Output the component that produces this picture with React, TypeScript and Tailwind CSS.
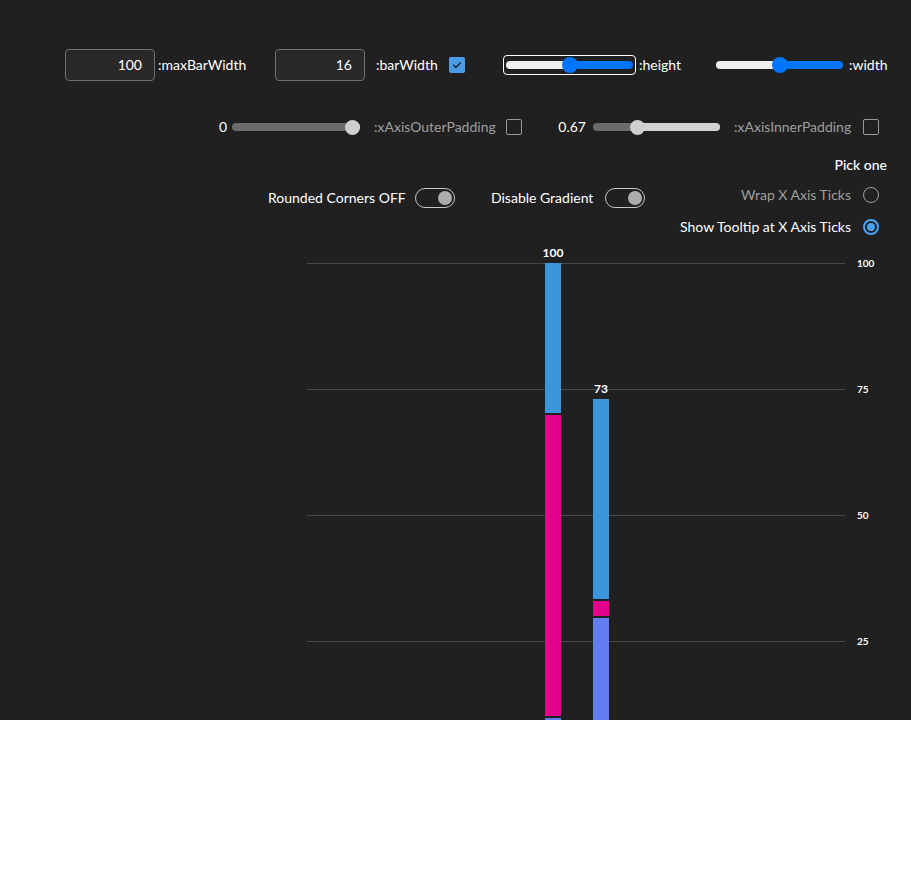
import React from "react";

function RangeTrack({
  width,
  value,
  height,
  trackH,
  leftCls,
  rightCls,
  thumbCls,
  thumbSize,
}: {
  width: number;
  value: number;
  height: number;
  trackH: number;
  leftCls: string;
  rightCls: string;
  thumbCls: string;
  thumbSize: number;
}) {
  // RTL slider: value 0 at the right end
  const c = 8 + (1 - value) * (width - 16);
  return (
    <div className="relative flex items-center" style={{ width, height }}>
      <div className="flex w-full overflow-hidden rounded-full" style={{ height: trackH }}>
        <div className={leftCls} style={{ width: c }} />
        <div className={`flex-1 ${rightCls}`} />
      </div>
      <div
        className={`absolute rounded-full ${thumbCls}`}
        style={{ left: c - thumbSize / 2, width: thumbSize, height: thumbSize, top: (height - thumbSize) / 2 }}
      />
    </div>
  );
}

function Checkbox({ checked }: { checked?: boolean }) {
  if (checked) {
    return (
      <div className="flex h-4 w-4 shrink-0 items-center justify-center rounded-[2px] bg-[#4a9be8]">
        <svg width="16" height="16" viewBox="0 0 16 16" fill="none">
          <path d="M4.6 8.3l2.2 2.2 4.6-4.7" stroke="#1c1c1c" strokeWidth="1.3" strokeLinecap="round" strokeLinejoin="round" />
        </svg>
      </div>
    );
  }
  return <div className="h-4 w-4 shrink-0 rounded-[2px] border border-[#9a9a9a]" />;
}

function Toggle() {
  return (
    <div className="ml-3 flex h-5 w-10 shrink-0 items-center justify-end rounded-full border border-[#c8c8c8] pr-[2px]">
      <div className="h-[14px] w-[14px] rounded-full bg-[#adadad]" />
    </div>
  );
}

function Radio({ checked }: { checked?: boolean }) {
  if (checked) {
    return (
      <div className="ml-3 flex h-4 w-4 shrink-0 items-center justify-center rounded-full border-2 border-[#4aa3f5]">
        <div className="h-2 w-2 rounded-full bg-[#4aa3f5]" />
      </div>
    );
  }
  return <div className="ml-3 h-4 w-4 shrink-0 rounded-full border border-[#a0a0a0]" />;
}

function Chart() {
  const grid = [23.5, 149.5, 275.5, 401.5];
  const ticks = [
    { y: 27, t: "100" },
    { y: 153, t: "75" },
    { y: 279, t: "50" },
    { y: 405, t: "25" },
  ];
  return (
    <svg width="911" height="480" className="mt-[3px] block">
      {grid.map((y) => (
        <line key={y} x1="307" x2="845" y1={y} y2={y} stroke="#474747" strokeWidth="1" />
      ))}
      {ticks.map((k) => (
        <text key={k.t} x="857" y={k.y} fill="#ffffff" fontSize="10" fontWeight="700" fontFamily="Lato, 'Noto Sans', sans-serif">
          {k.t}
        </text>
      ))}
      {/* bar 1 */}
      <rect x="545" y="23" width="16" height="150" fill="#3a96dd" />
      <rect x="545" y="175" width="16" height="301" fill="#e3008c" />
      <rect x="545" y="478" width="16" height="60" fill="#637cef" />
      <text x="553" y="17" textAnchor="middle" fill="#ffffff" fontSize="12" fontWeight="700" fontFamily="Lato, 'Noto Sans', sans-serif">
        100
      </text>
      {/* bar 2 */}
      <rect x="593" y="159" width="16" height="200" fill="#3a96dd" />
      <rect x="593" y="361" width="16" height="15" fill="#e3008c" />
      <rect x="593" y="378" width="16" height="160" fill="#637cef" />
      <text x="601" y="153" textAnchor="middle" fill="#ffffff" fontSize="12" fontWeight="700" fontFamily="Lato, 'Noto Sans', sans-serif">
        73
      </text>
    </svg>
  );
}

export default function App() {
  return (
    <div className="min-h-[891px] w-[911px] bg-white font-['Lato','Noto_Sans',sans-serif] text-sm text-white">
      <div className="h-[720px] overflow-hidden bg-[#202020]">
        {/* Row 1 */}
        <div className="mt-[49px] flex h-8 items-center whitespace-nowrap">
          <div className="ml-[65px] flex h-8 w-[90px] shrink-0 items-center justify-end rounded-[4px] border border-[#6e6e6e] bg-[#292929] pr-3">
            100
          </div>
          <div className="ml-[3px] w-[117px] shrink-0">:maxBarWidth</div>
          <div className="flex h-8 w-[90px] shrink-0 items-center justify-end rounded-[4px] border border-[#6e6e6e] bg-[#292929] pr-3">
            16
          </div>
          <div className="ml-[11px] w-[73px] shrink-0">:barWidth</div>
          <Checkbox checked />
          <div className="ml-[38px] flex h-5 w-[133px] shrink-0 items-center justify-center rounded-[4px] border border-white">
            <RangeTrack
              width={127}
              value={0.5}
              height={16}
              trackH={8}
              leftCls="bg-[#efefef]"
              rightCls="bg-[#0075ff]"
              thumbCls="bg-[#0075ff]"
              thumbSize={16}
            />
          </div>
          <div className="ml-[3px] w-[74px] shrink-0">:height</div>
          <div className="flex h-5 w-[133px] shrink-0 items-center justify-center">
            <RangeTrack
              width={127}
              value={0.5}
              height={16}
              trackH={8}
              leftCls="bg-[#efefef]"
              rightCls="bg-[#0075ff]"
              thumbCls="bg-[#0075ff]"
              thumbSize={16}
            />
          </div>
          <div className="ml-[3px] shrink-0">:width</div>
        </div>

        {/* Row 2 */}
        <div className="mt-[36px] flex h-5 items-center whitespace-nowrap">
          <div className="ml-[200px] w-[27px] shrink-0 text-right">0</div>
          <div className="ml-[5px] shrink-0">
            <RangeTrack
              width={128}
              value={0}
              height={16}
              trackH={8}
              leftCls="bg-[#6b6b6b]"
              rightCls="bg-[#d2d2d2]"
              thumbCls="bg-[#cfcfcf]"
              thumbSize={15}
            />
          </div>
          <div className="ml-[14px] w-[132px] shrink-0 text-[#9e9e9e]">:xAxisOuterPadding</div>
          <Checkbox />
          <div className="w-[64px] shrink-0 text-right">0.67</div>
          <div className="ml-[7px] shrink-0">
            <RangeTrack
              width={127}
              value={0.67}
              height={16}
              trackH={8}
              leftCls="bg-[#6b6b6b]"
              rightCls="bg-[#d2d2d2]"
              thumbCls="bg-[#cfcfcf]"
              thumbSize={15}
            />
          </div>
          <div className="ml-[14px] w-[129px] shrink-0 text-[#9e9e9e]">:xAxisInnerPadding</div>
          <Checkbox />
        </div>

        {/* Row 3 / choice group */}
        <div className="mt-[18px] flex whitespace-nowrap">
          <div className="ml-[268px] mt-[33px] flex h-5 items-center">
            <span className="w-[135px] shrink-0 text-right">Rounded Corners OFF</span>
            <Toggle />
            <span className="ml-9 w-[102px] shrink-0 text-right">Disable Gradient</span>
            <Toggle />
          </div>
          <div className="ml-9 flex w-[206px] flex-col">
            <div className="h-5 text-right font-medium">Pick one</div>
            <div className="mt-[10px] flex h-5 items-center justify-end pr-2">
              <span className="text-[#9e9e9e]">Wrap X Axis Ticks</span>
              <Radio />
            </div>
            <div className="mt-3 flex h-5 items-center justify-end pr-2">
              <span>Show Tooltip at X Axis Ticks</span>
              <Radio checked />
            </div>
          </div>
        </div>

        <Chart />
      </div>
    </div>
  );
}
